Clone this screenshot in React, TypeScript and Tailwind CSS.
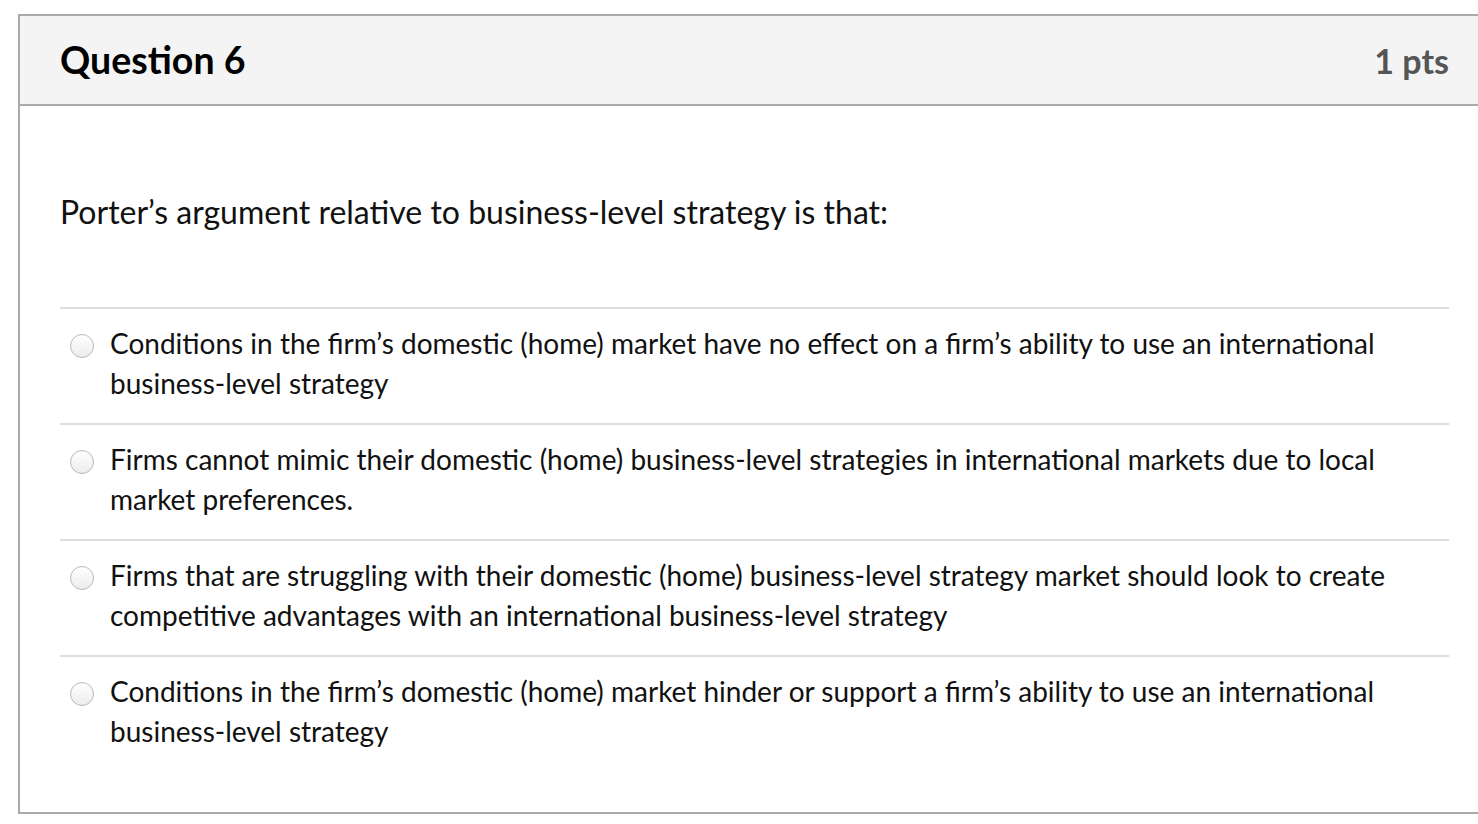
import React from 'react';

const options = [
    "Conditions in the firm\u2019s domestic (home) market have no effect on a firm\u2019s ability to use an international business-level strategy",
    "Firms cannot mimic their domestic (home) business-level strategies in international markets due to local market preferences.",
    "Firms that are struggling with their domestic (home) business-level strategy market should look to create competitive advantages with an international business-level strategy",
    "Conditions in the firm\u2019s domestic (home) market hinder or support a firm\u2019s ability to use an international business-level strategy",
];

const App: React.FC = () => {
    return (
        <div className="w-[1478px] h-[824px] overflow-hidden bg-white pt-[14px] pl-[18px] font-['Lato','Liberation_Sans',sans-serif] text-[#111]">
            <div className="w-[1471px] h-[800px] border-2 border-r-0 border-[#aaaaaa]">
                <div className="h-[90px] bg-[#f4f4f4] border-b-2 border-[#aaaaaa] flex items-center justify-between pl-[40px] pr-[40px]">
                    <h2 className="text-[37.5px] font-bold text-black mt-[1px]">Question 6</h2>
                    <span className="text-[34px] font-bold text-[#555]">1 pts</span>
                </div>
                <div className="px-[40px]">
                    <p className="mt-[86px] mb-[75px] text-[32px] leading-[40px]">Porter&rsquo;s argument relative to business-level strategy is that:</p>
                    {options.map((opt, i) => (
                        <div key={i} className="border-t-2 border-[#dddddd] h-[116px] flex items-start pt-[14px]">
                            <span className="mt-[11px] ml-[10px] mr-[16px] shrink-0 w-[24px] h-[24px] rounded-full border border-[#b9b9b9] bg-gradient-to-b from-white to-[#ececec]"></span>
                            <p className="text-[28px] leading-[40px] pr-[40px]">{opt}</p>
                        </div>
                    ))}
                </div>
            </div>
        </div>
    );
};

export default App;
